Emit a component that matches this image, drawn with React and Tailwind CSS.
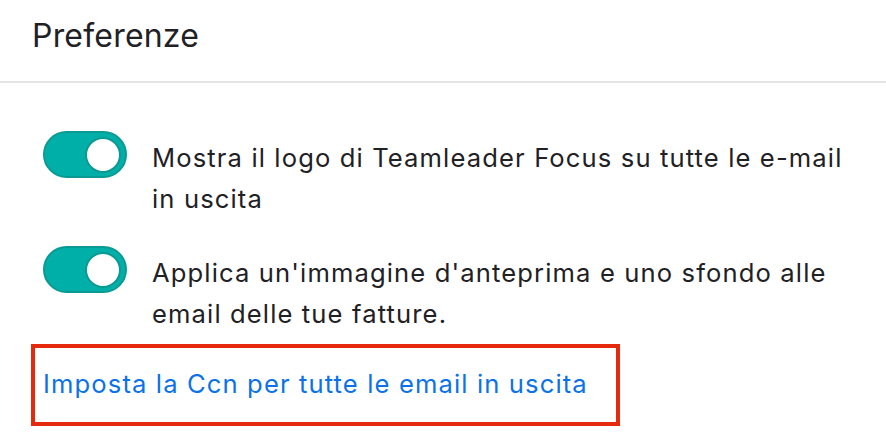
import React from 'react';

function Toggle() {
  return (
    <div className="flex h-[47px] w-[84px] shrink-0 items-center justify-end rounded-full border-2 border-[#0b9a93] bg-[#00b0a8] pr-[4px]">
      <div className="h-[36px] w-[36px] rounded-full border-2 border-[#0b9a93] bg-white" />
    </div>
  );
}

function PrefRow({ children, className = '' }) {
  return (
    <div className={`flex items-start gap-[25px] pl-[12px] ${className}`}>
      <Toggle />
      <p className="mt-[6px] text-[25.6px] leading-[41px] tracking-[1.12px] text-[#1f2125]">{children}</p>
    </div>
  );
}

export default function App() {
  return (
    <div
      className="h-[446px] w-[886px] overflow-hidden bg-white"
      style={{ fontFamily: 'Inter, "Noto Sans", sans-serif' }}
    >
      <div className="border-b-2 border-[#e4e4e6] px-[32px] pt-[12px] pb-[21px]">
        <h1 className="text-[32px] font-normal leading-[48px] tracking-[0.2px] text-[#1f2125]">Preferenze</h1>
      </div>

      <div className="px-[31px] pt-[48px]">
        <PrefRow>
          Mostra il logo di Teamleader Focus su tutte le e-mail in uscita
        </PrefRow>
        <PrefRow className="mt-[27px]">
          Applica un'immagine d'anteprima e uno sfondo alle email delle tue fatture.
        </PrefRow>

        <div className="mt-[10px] w-[589px] border-4 border-[#e5290c] pl-[8px] pt-[15px] pb-[18px]">
          <a href="#" className="text-[25.6px] leading-[41px] tracking-[1.12px] text-[#0b72e7]">
            Imposta la Ccn per tutte le email in uscita
          </a>
        </div>
      </div>
    </div>
  );
}
